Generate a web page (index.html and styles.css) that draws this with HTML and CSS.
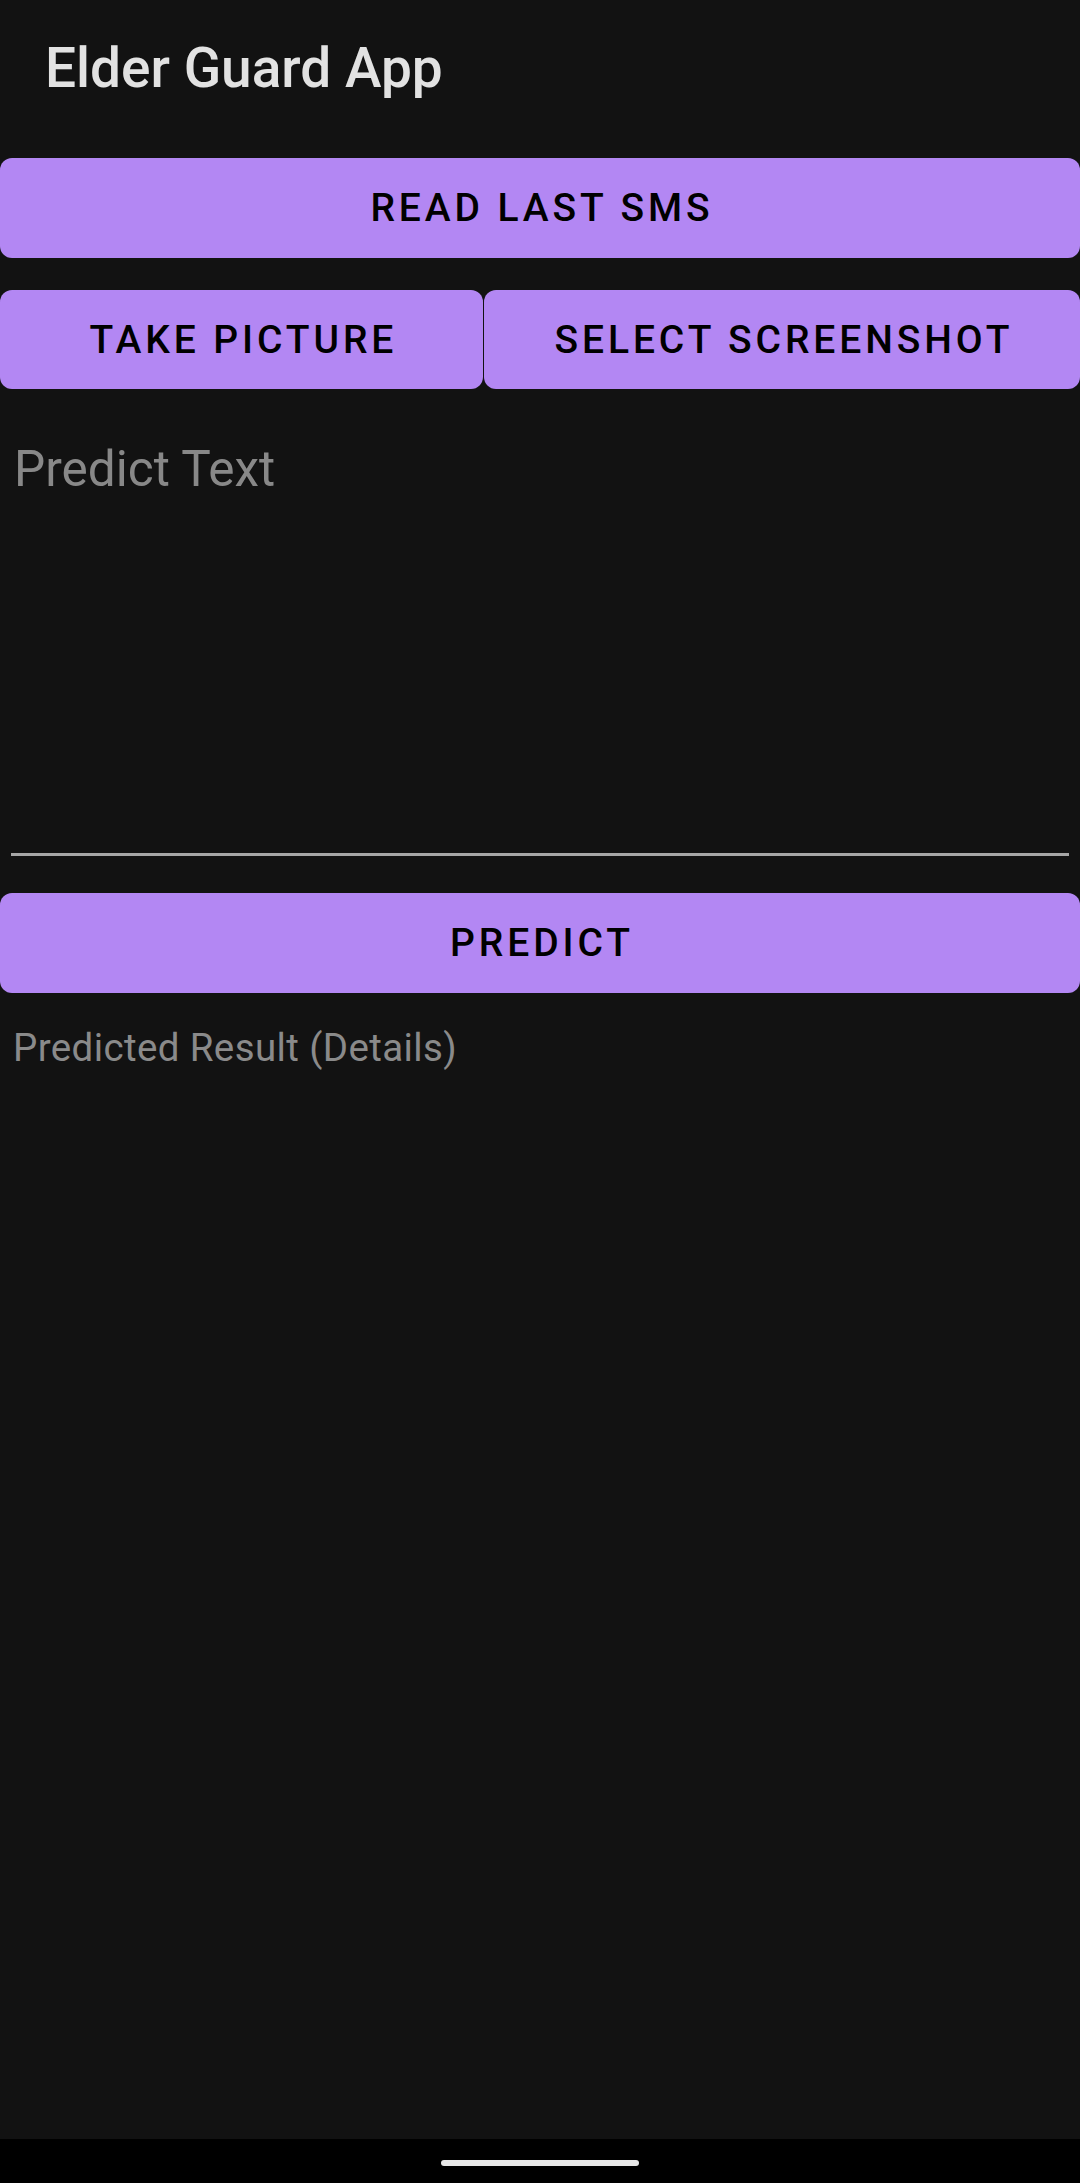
FILE: index.html
```html
<!DOCTYPE html>
<html>
<head>
<meta charset="utf-8">
<link rel="stylesheet" href="styles.css">
</head>
<body>
<div class="screen">
  <header class="toolbar">Elder Guard App</header>
  <main class="content">
    <div class="btn btn-read">READ LAST SMS</div>
    <div class="btn-row">
      <div class="btn btn-take">TAKE PICTURE</div>
      <div class="btn btn-select">SELECT SCREENSHOT</div>
    </div>
    <div class="field">
      <div class="hint">Predict Text</div>
      <div class="underline"></div>
    </div>
    <div class="btn btn-predict">PREDICT</div>
    <div class="result">Predicted Result (Details)</div>
  </main>
  <div class="navbar"><div class="handle"></div></div>
</div>
</body>
</html>
```
FILE: styles.css
```css
html, body {
  margin: 0;
  padding: 0;
  background: #121212;
}
.screen {
  width: 1080px;
  height: 2183px;
  display: flex;
  flex-direction: column;
  background: #121212;
  font-family: Roboto, "Noto Sans", sans-serif;
}
.toolbar {
  box-sizing: border-box;
  height: 154px;
  padding: 36px 0 0 45px;
  font-size: 55px;
  line-height: 64px;
  font-weight: 500;
  color: #e2e2e2;
}
.content {
  flex: 1;
  display: flex;
  flex-direction: column;
}
.btn {
  height: 100px;
  background: #b387f3;
  border-radius: 12px;
  display: flex;
  align-items: center;
  justify-content: center;
  color: #000;
  font-size: 39px;
  font-weight: 500;
  letter-spacing: 0.1em;
  padding-left: 0.1em;
  box-sizing: border-box;
}
.btn-read {
  margin-top: 4px;
}
.btn-row {
  margin-top: 32px;
  display: flex;
  gap: 1px;
}
.btn-take {
  width: 483px;
  height: 99px;
}
.btn-select {
  flex: 1;
  height: 99px;
}
.field {
  margin-top: 52px;
  display: flex;
  flex-direction: column;
}
.hint {
  padding-left: 14px;
  font-size: 49.5px;
  line-height: 56px;
  color: #888888;
  height: 412px;
}
.underline {
  margin: 0 11px;
  height: 3px;
  background: #a6a6a6;
}
.btn-predict {
  margin-top: 37px;
}
.result {
  margin-top: 33px;
  padding-left: 13px;
  font-size: 38.5px;
  line-height: 44px;
  letter-spacing: 0.01em;
  color: #8a8a8a;
}
.navbar {
  height: 44px;
  background: #000;
  display: flex;
  justify-content: center;
  padding-top: 21px;
  box-sizing: border-box;
}
.handle {
  width: 198px;
  height: 6px;
  border-radius: 3px;
  background: #e8e8e8;
}
```
